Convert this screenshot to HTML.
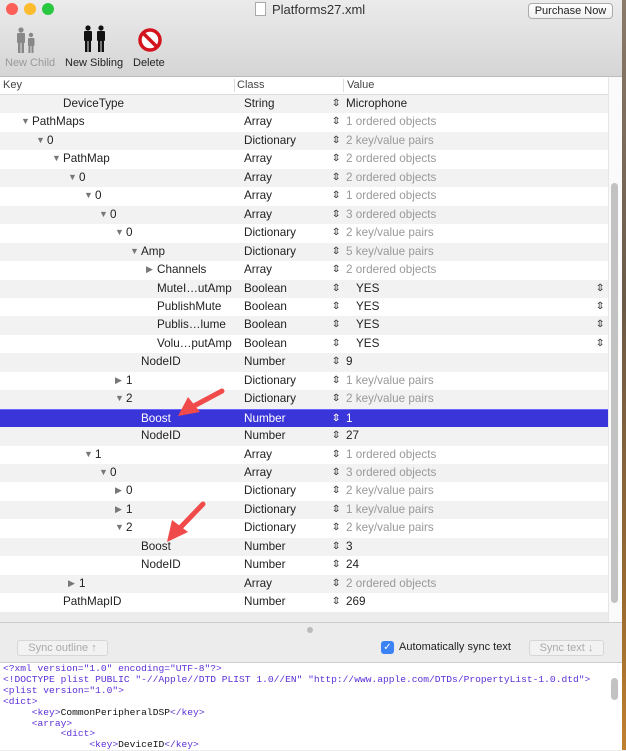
<!DOCTYPE html>
<html><head><meta charset="utf-8"><style>
*{margin:0;padding:0;box-sizing:border-box}
body{width:626px;height:750px;overflow:hidden;position:relative;font-family:"Liberation Sans",sans-serif;font-size:11.7px;color:#222;background:#ececec}
.abs{position:absolute}
#desk{left:622px;top:0;width:4px;height:750px;background:linear-gradient(#8a7a6a,#6b5a48 40%,#9a6a30 80%,#c08030)}
#tb{left:0;top:0;width:622px;height:77px;background:linear-gradient(#ebebeb,#d5d5d5);border-bottom:1px solid #bdbdbd}
.dot{width:12px;height:12px;border-radius:50%;top:3px}
.row{position:absolute;left:0;width:608px;height:18.45px;line-height:18px}
.row span{position:absolute;white-space:nowrap}
.tri{font-size:9px;color:#777;top:-1px}
.st{font-size:10px;color:#444;transform:scaleX(1.2)}
.code{position:absolute;left:3px;font-family:"Liberation Mono",monospace;font-size:9.6px;color:#5b2fd6;white-space:pre;line-height:10.9px}
.code b{font-weight:normal;color:#111}
</style></head><body>
<div id="desk" class="abs"></div>
<div id="tb" class="abs">
 <div class="abs dot" style="left:6px;background:#fc5f57"></div>
 <div class="abs dot" style="left:24px;background:#fdbc2e"></div>
 <div class="abs dot" style="left:42px;background:#28c840"></div>
 <div class="abs" style="left:255px;top:2px;width:11px;height:14px;background:#fff;border:1px solid #aaa"></div>
 <div class="abs" style="left:272px;top:2px;font-size:13px;color:#333">Platforms27.xml</div>
 <div class="abs" style="left:528px;top:3px;width:85px;height:16px;border:1px solid #aaa;border-radius:4px;background:linear-gradient(#fff,#f0f0f0);font-size:11px;text-align:center;line-height:14px;color:#222">Purchase Now</div>
 <svg class="abs" style="left:15px;top:27px" width="30" height="28"><g fill="#888"><circle cx="6" cy="3" r="2.6"/><rect x="2" y="6" width="8" height="10" rx="1"/><rect x="3" y="15" width="2.5" height="11"/><rect x="6.5" y="15" width="2.5" height="11"/><circle cx="16" cy="8" r="2.2"/><rect x="13" y="11" width="6.5" height="8" rx="1"/><rect x="13.5" y="18" width="2" height="8"/><rect x="16.5" y="18" width="2" height="8"/></g></svg>
 <svg class="abs" style="left:82px;top:25px" width="30" height="30"><g fill="#111"><circle cx="6" cy="3" r="2.6"/><rect x="2" y="6" width="8" height="10" rx="1"/><rect x="3" y="15" width="2.5" height="12"/><rect x="6.5" y="15" width="2.5" height="12"/><circle cx="19" cy="3" r="2.6"/><rect x="15" y="6" width="8" height="10" rx="1"/><rect x="16" y="15" width="2.5" height="12"/><rect x="19.5" y="15" width="2.5" height="12"/></g></svg>
 <svg class="abs" style="left:138px;top:28px" width="24" height="24"><circle cx="12" cy="12" r="10" fill="#fff" stroke="#d4141c" stroke-width="3.5"/><line x1="5" y1="5" x2="19" y2="19" stroke="#d4141c" stroke-width="3.5"/></svg>
 <div class="abs" style="left:5px;top:57px;color:#999;font-size:11px">New Child</div>
 <div class="abs" style="left:65px;top:57px;font-size:11px">New Sibling</div>
 <div class="abs" style="left:133px;top:57px;font-size:11px">Delete</div>
</div>
<div class="abs" style="left:0;top:77px;width:608px;height:18px;background:#fff;border-bottom:1px solid #ddd;font-size:11px;color:#444;line-height:17px">
 <span class="abs" style="left:3px">Key</span>
 <div class="abs" style="left:234px;top:2px;width:1px;height:13px;background:#ddd"></div>
 <span class="abs" style="left:237px">Class</span>
 <div class="abs" style="left:343px;top:2px;width:1px;height:13px;background:#ddd"></div>
 <span class="abs" style="left:347px">Value</span>
</div>
<div id="rows" class="abs" style="left:0;top:95px;width:608px;height:516px;background:#fff"></div>
<div class="abs" style="left:608px;top:77px;width:14px;height:545px;background:#fafafa;border-left:1px solid #e6e6e6"></div>
<div class="abs" style="left:611px;top:183px;width:7px;height:420px;background:#c2c2c2;border-radius:4px"></div>
<div class="abs" style="left:0;top:622px;width:622px;height:1px;background:#ccc"></div>
<div class="abs" style="left:307px;top:627px;width:6px;height:6px;border-radius:50%;background:#bbb"></div>
<div class="abs" style="left:17px;top:640px;width:91px;height:16px;border:1px solid #d6d6d6;border-radius:3px;background:#f2f2f2;color:#aaa;font-size:11px;text-align:center;line-height:14px">Sync outline ↑</div>
<div class="abs" style="left:381px;top:641px;width:13px;height:13px;border-radius:3px;background:#3b82f5;color:#fff;font-size:10px;text-align:center;line-height:13px">✓</div>
<div class="abs" style="left:399px;top:641px;font-size:11px;color:#222">Automatically sync text</div>
<div class="abs" style="left:529px;top:640px;width:75px;height:16px;border:1px solid #d6d6d6;border-radius:3px;background:#f2f2f2;color:#aaa;font-size:11px;text-align:center;line-height:14px">Sync text ↓</div>
<div class="abs" style="left:0;top:662px;width:622px;height:88px;background:#fff;border-top:1px solid #ccc">
<div class="abs" style="left:611px;top:15px;width:7px;height:22px;background:#c2c2c2;border-radius:4px"></div>
<div class="code" style="top:1px">&lt;?xml version="1.0" encoding="UTF-8"?&gt;
&lt;!DOCTYPE plist PUBLIC "-//Apple//DTD PLIST 1.0//EN" "http://www.apple.com/DTDs/PropertyList-1.0.dtd"&gt;
&lt;plist version="1.0"&gt;
&lt;dict&gt;
     &lt;key&gt;<b>CommonPeripheralDSP</b>&lt;/key&gt;
     &lt;array&gt;
          &lt;dict&gt;
               &lt;key&gt;<b>DeviceID</b>&lt;/key&gt;</div>
</div>
<svg class="abs" style="left:170px;top:385px" width="60" height="36"><line x1="52" y1="6" x2="22" y2="22" stroke="#f04a4a" stroke-width="5" stroke-linecap="round"/><polygon points="8,31 18,12 30,27" fill="#f04a4a"/></svg>
<svg class="abs" style="left:160px;top:498px" width="50" height="50"><line x1="43" y1="6" x2="20" y2="30" stroke="#f04a4a" stroke-width="5" stroke-linecap="round"/><polygon points="7,44 12,22 28,34" fill="#f04a4a"/></svg>
<script>
var R=[["DeviceType",63,-1,"String","Microphone",0],["PathMaps",32,1,"Array","1 ordered objects",1],["0",47,1,"Dictionary","2 key/value pairs",1],["PathMap",63,1,"Array","2 ordered objects",1],["0",79,1,"Array","2 ordered objects",1],["0",95,1,"Array","1 ordered objects",1],["0",110,1,"Array","3 ordered objects",1],["0",126,1,"Dictionary","2 key/value pairs",1],["Amp",141,1,"Dictionary","5 key/value pairs",1],["Channels",157,0,"Array","2 ordered objects",1],["MuteI…utAmp",157,-1,"Boolean","YES",2],["PublishMute",157,-1,"Boolean","YES",2],["Publis…lume",157,-1,"Boolean","YES",2],["Volu…putAmp",157,-1,"Boolean","YES",2],["NodeID",141,-1,"Number","9",0],["1",126,0,"Dictionary","1 key/value pairs",1],["2",126,1,"Dictionary","2 key/value pairs",1],["Boost",141,-1,"Number","1",0],["NodeID",141,-1,"Number","27",0],["1",95,1,"Array","1 ordered objects",1],["0",110,1,"Array","3 ordered objects",1],["0",126,0,"Dictionary","2 key/value pairs",1],["1",126,0,"Dictionary","1 key/value pairs",1],["2",126,1,"Dictionary","2 key/value pairs",1],["Boost",141,-1,"Number","3",0],["NodeID",141,-1,"Number","24",0],["1",79,0,"Array","2 ordered objects",1],["PathMapID",63,-1,"Number","269",0]];
var h="";R.forEach(function(r,i){var sel=i==17;var bg=sel?"#3a35d8":(i%2==0?"#f2f2f2":"#fff");var c=sel?"#fff":"#222";
h+='<div class="row" style="top:'+(i*18.45)+'px;background:'+bg+';color:'+c+(sel?';border-top:1px solid #6a66ff':'')+'">';
if(r[2]>=0)h+='<span class="tri" style="left:'+(r[1]-11)+'px">'+(r[2]?'▼':'▶')+'</span>';
h+='<span style="left:'+r[1]+'px">'+r[0]+'</span><span style="left:244px">'+r[3]+'</span><span class="st" style="left:332px;'+(sel?'color:#fff':'')+'">⇕</span>';
if(r[5]==2)h+='<span style="left:356px">'+r[4]+'</span><span class="st" style="left:596px">⇕</span>';
else h+='<span style="left:346px;'+(r[5]==1?'color:#999':'')+'">'+r[4]+'</span>';
h+='</div>';});
document.getElementById("rows").innerHTML=h;
</script>
</body></html>
